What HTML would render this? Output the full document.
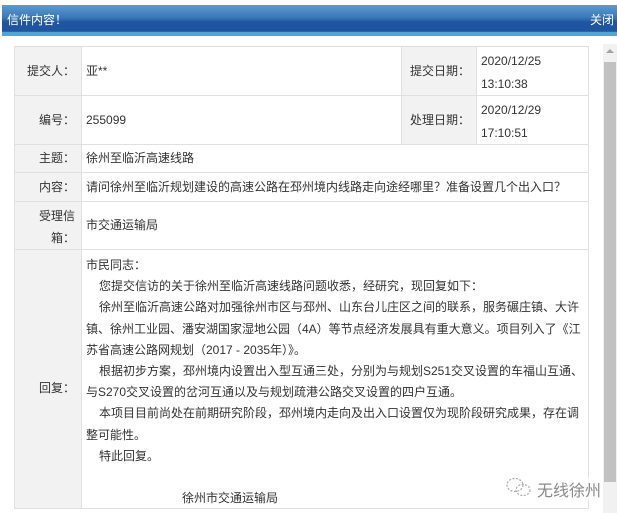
<!DOCTYPE html>
<html><head><meta charset="utf-8"><style>
*{margin:0;padding:0;box-sizing:border-box}
body{width:617px;height:513px;background:#fff;font-family:"Liberation Sans","Noto Sans CJK SC",sans-serif;font-size:12px;color:#333;position:relative;overflow:hidden}
.hdr{position:absolute;left:2px;top:5px;width:615px;height:31px;background:linear-gradient(#5b9bd0 0,#3a78b8 40%,#1f55a0 55%,#1f55a0 85%,#4ea6d6 88%,#4ea6d6 100%);color:#fff;font-size:12px}
.hdr .t{position:absolute;left:5px;top:6px}
.hdr .c{position:absolute;right:3px;top:6px}
.sb{position:absolute;left:603px;top:44px;width:14px;height:469px;background:#f1f1f1}
.sb .th{position:absolute;left:1px;top:18px;width:12px;height:420px;background:#c1c1c1}
.sb .ar{position:absolute;left:3px;top:5px;width:0;height:0;border-left:4px solid transparent;border-right:4px solid transparent;border-bottom:4px solid #a3a3a3}
.cell{position:absolute;border:1px solid #e0e0e0;line-height:21px}
.lb{background:#f2f2f2;text-align:right;padding-right:6px}
.v{background:#fff;padding-left:4px}
.v p{text-indent:13px}
</style></head><body>
<div class="hdr"><span class="t">信件内容！</span><span class="c">关闭</span></div>
<div class="sb"><div class="ar"></div><div class="th"></div></div>

<div class="cell lb" style="left:14px;top:46px;width:68px;height:50px;padding-top:14px">提交人：</div>
<div class="cell v" style="left:81px;top:46px;width:321px;height:50px;padding-top:14px">亚**</div>
<div class="cell lb" style="left:401px;top:46px;width:76px;height:50px;padding-top:14px">提交日期：</div>
<div class="cell v" style="left:476px;top:46px;width:113px;height:50px;padding-top:3px;line-height:23px">2020/12/25<br>13:10:38</div>

<div class="cell lb" style="left:14px;top:95px;width:68px;height:50px;padding-top:14px">编号：</div>
<div class="cell v" style="left:81px;top:95px;width:321px;height:50px;padding-top:14px">255099</div>
<div class="cell lb" style="left:401px;top:95px;width:76px;height:50px;padding-top:14px">处理日期：</div>
<div class="cell v" style="left:476px;top:95px;width:113px;height:50px;padding-top:3px;line-height:23px">2020/12/29<br>17:10:51</div>

<div class="cell lb" style="left:14px;top:144px;width:68px;height:29px;padding-top:3px">主题：</div>
<div class="cell v" style="left:81px;top:144px;width:508px;height:29px;padding-top:3px">徐州至临沂高速线路</div>

<div class="cell lb" style="left:14px;top:172px;width:68px;height:30px;padding-top:4px">内容：</div>
<div class="cell v" style="left:81px;top:172px;width:508px;height:30px;padding-top:4px;white-space:nowrap">请问徐州至临沂规划建设的高速公路在邳州境内线路走向途经哪里？准备设置几个出入口？</div>

<div class="cell lb" style="left:14px;top:201px;width:68px;height:49px;padding-top:3px;line-height:22px">受理信<br>箱：</div>
<div class="cell v" style="left:81px;top:201px;width:508px;height:49px;padding-top:13px">市交通运输局</div>

<div class="cell lb" style="left:14px;top:249px;width:68px;height:260px;padding-top:128px">回复：</div>
<div class="cell v" style="left:81px;top:249px;width:508px;height:260px;padding-top:5px;padding-right:2px;line-height:21.2px">市民同志：<p>您提交信访的关于徐州至临沂高速线路问题收悉，经研究，现回复如下：</p><p>徐州至临沂高速公路对加强徐州市区与邳州、山东台儿庄区之间的联系，服务碾庄镇、大许镇、徐州工业园、潘安湖国家湿地公园（4A）等节点经济发展具有重大意义。项目列入了《江苏省高速公路网规划（2017 - 2035年）》。</p><p>根据初步方案，邳州境内设置出入型互通三处，分别为与规划S251交叉设置的车福山互通、与S270交叉设置的岔河互通以及与规划疏港公路交叉设置的四户互通。</p><p>本项目目前尚处在前期研究阶段，邳州境内走向及出入口设置仅为现阶段研究成果，存在调整可能性。</p><p>特此回复。</p><br><span style="padding-left:96px">徐州市交通运输局</span></div>

<svg style="position:absolute;left:505px;top:476px" width="28" height="22" viewBox="0 0 28 22"><g fill="none" stroke="#aaa" stroke-width="1.2" stroke-dasharray="2 1.5"><ellipse cx="10" cy="9" rx="8" ry="6.5"/><ellipse cx="18" cy="14" rx="7" ry="5.5"/></g></svg>
<div style="position:absolute;left:537px;top:477px;font-size:16px;color:#8a8a8a;background:rgba(255,255,255,.6)">无线徐州</div>
</body></html>
